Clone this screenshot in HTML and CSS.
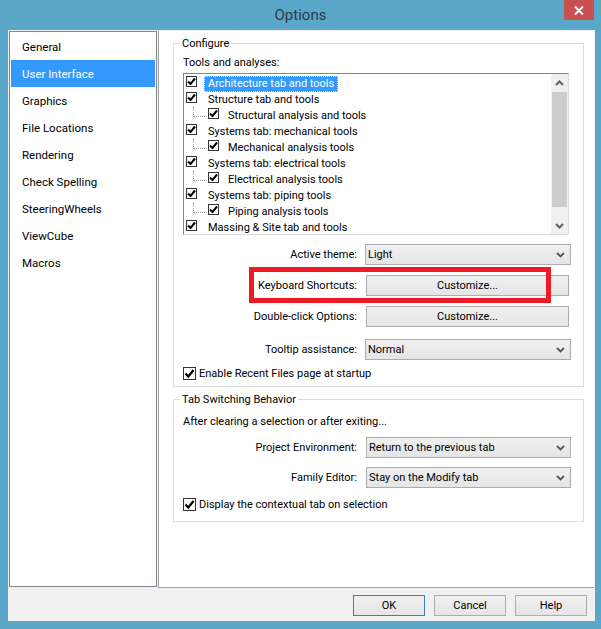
FILE: index.html
```html
<!DOCTYPE html>
<html>
<head>
<meta charset="utf-8">
<title>Options</title>
<link rel="stylesheet" href="styles.css">
</head>
<body>
<div class="window">
  <div class="titlebar">
    <span class="title">Options</span>
    <span class="close"><svg width="10" height="9" viewBox="0 0 10 9"><path d="M1 0.5 L9 8.5 M9 0.5 L1 8.5" stroke="#fff" stroke-width="2"/></svg></span>
  </div>
  <div class="client">
    <div class="main">
      <ul class="nav">
        <li>General</li>
        <li class="sel">User Interface</li>
        <li>Graphics</li>
        <li>File Locations</li>
        <li>Rendering</li>
        <li>Check Spelling</li>
        <li>SteeringWheels</li>
        <li>ViewCube</li>
        <li>Macros</li>
      </ul>
      <div class="panel">
        <fieldset class="group g1">
          <legend>Configure</legend>
          <div class="caption">Tools and analyses:</div>
          <div class="listbox">
            <div class="rows">
              <div class="item"><span class="cb"><svg width="9" height="9" viewBox="0 0 9 9"><path d="M1 4.5 L3.5 7 L8 1.5" fill="none" stroke="#000" stroke-width="2"/></svg></span><span class="lbl hl">Architecture tab and tools</span></div>
              <div class="item"><span class="cb"><svg width="9" height="9" viewBox="0 0 9 9"><path d="M1 4.5 L3.5 7 L8 1.5" fill="none" stroke="#000" stroke-width="2"/></svg></span><span class="lbl">Structure tab and tools</span></div>
              <div class="item child"><span class="tree"></span><span class="cb"><svg width="9" height="9" viewBox="0 0 9 9"><path d="M1 4.5 L3.5 7 L8 1.5" fill="none" stroke="#000" stroke-width="2"/></svg></span><span class="lbl">Structural analysis and tools</span></div>
              <div class="item"><span class="cb"><svg width="9" height="9" viewBox="0 0 9 9"><path d="M1 4.5 L3.5 7 L8 1.5" fill="none" stroke="#000" stroke-width="2"/></svg></span><span class="lbl">Systems tab: mechanical tools</span></div>
              <div class="item child"><span class="tree"></span><span class="cb"><svg width="9" height="9" viewBox="0 0 9 9"><path d="M1 4.5 L3.5 7 L8 1.5" fill="none" stroke="#000" stroke-width="2"/></svg></span><span class="lbl">Mechanical analysis tools</span></div>
              <div class="item"><span class="cb"><svg width="9" height="9" viewBox="0 0 9 9"><path d="M1 4.5 L3.5 7 L8 1.5" fill="none" stroke="#000" stroke-width="2"/></svg></span><span class="lbl">Systems tab: electrical tools</span></div>
              <div class="item child"><span class="tree"></span><span class="cb"><svg width="9" height="9" viewBox="0 0 9 9"><path d="M1 4.5 L3.5 7 L8 1.5" fill="none" stroke="#000" stroke-width="2"/></svg></span><span class="lbl">Electrical analysis tools</span></div>
              <div class="item"><span class="cb"><svg width="9" height="9" viewBox="0 0 9 9"><path d="M1 4.5 L3.5 7 L8 1.5" fill="none" stroke="#000" stroke-width="2"/></svg></span><span class="lbl">Systems tab: piping tools</span></div>
              <div class="item child"><span class="tree"></span><span class="cb"><svg width="9" height="9" viewBox="0 0 9 9"><path d="M1 4.5 L3.5 7 L8 1.5" fill="none" stroke="#000" stroke-width="2"/></svg></span><span class="lbl">Piping analysis tools</span></div>
              <div class="item"><span class="cb"><svg width="9" height="9" viewBox="0 0 9 9"><path d="M1 4.5 L3.5 7 L8 1.5" fill="none" stroke="#000" stroke-width="2"/></svg></span><span class="lbl">Massing &amp; Site tab and tools</span></div>
            </div>
            <div class="scrollbar">
              <div class="arrow"><svg width="9" height="6" viewBox="0 0 9 6"><path d="M1 5 L4.5 1.5 L8 5" fill="none" stroke="#606060" stroke-width="2"/></svg></div>
              <div class="track"><div class="thumb"></div></div>
              <div class="arrow"><svg width="9" height="6" viewBox="0 0 9 6"><path d="M1 1 L4.5 4.5 L8 1" fill="none" stroke="#606060" stroke-width="2"/></svg></div>
            </div>
          </div>

          <div class="row r-theme">
            <label>Active theme:</label>
            <div class="select"><span>Light</span><svg width="9" height="6" viewBox="0 0 9 6"><path d="M1 1 L4.5 4.5 L8 1" fill="none" stroke="#555" stroke-width="1.8"/></svg></div>
          </div>
          <div class="row r-kbd">
            <label>Keyboard Shortcuts:</label>
            <div class="button">Customize...</div>
            <div class="callout"></div>
          </div>
          <div class="row r-dbl">
            <label>Double-click Options:</label>
            <div class="button">Customize...</div>
          </div>
          <div class="row r-tip">
            <label>Tooltip assistance:</label>
            <div class="select"><span>Normal</span><svg width="9" height="6" viewBox="0 0 9 6"><path d="M1 1 L4.5 4.5 L8 1" fill="none" stroke="#555" stroke-width="1.8"/></svg></div>
          </div>
          <div class="check r-recent"><span class="box"><svg width="11" height="11" viewBox="0 0 11 11"><path d="M1.5 5.5 L4.3 8.5 L9.5 2" fill="none" stroke="#000" stroke-width="2.2"/></svg></span><span>Enable Recent Files page at startup</span></div>
        </fieldset>

        <fieldset class="group g2">
          <legend>Tab Switching Behavior</legend>
          <div class="caption">After clearing a selection or after exiting...</div>
          <div class="row r-proj">
            <label>Project Environment:</label>
            <div class="select"><span>Return to the previous tab</span><svg width="9" height="6" viewBox="0 0 9 6"><path d="M1 1 L4.5 4.5 L8 1" fill="none" stroke="#555" stroke-width="1.8"/></svg></div>
          </div>
          <div class="row r-fam">
            <label>Family Editor:</label>
            <div class="select"><span>Stay on the Modify tab</span><svg width="9" height="6" viewBox="0 0 9 6"><path d="M1 1 L4.5 4.5 L8 1" fill="none" stroke="#555" stroke-width="1.8"/></svg></div>
          </div>
          <div class="check r-ctx"><span class="box"><svg width="11" height="11" viewBox="0 0 11 11"><path d="M1.5 5.5 L4.3 8.5 L9.5 2" fill="none" stroke="#000" stroke-width="2.2"/></svg></span><span>Display the contextual tab on selection</span></div>
        </fieldset>
      </div>
    </div>
    <div class="footer">
      <div class="fbtn default">OK</div>
      <div class="fbtn">Cancel</div>
      <div class="fbtn">Help</div>
    </div>
  </div>
</div>
</body>
</html>
```

FILE: styles.css
```css
* { box-sizing: border-box; }
html, body { margin: 0; padding: 0; }
body {
  width: 601px;
  height: 629px;
  overflow: hidden;
  background: #5ba7ca;
  font-family: Roboto, "Liberation Sans", sans-serif;
  font-size: 11px;
  color: #000;
}
.window {
  width: 601px;
  height: 629px;
  display: flex;
  flex-direction: column;
}
.titlebar {
  height: 30px;
  display: grid;
  grid-template-columns: 1fr auto 1fr;
  align-items: start;
}
.title {
  grid-column: 2;
  font-size: 15px;
  line-height: 30px;
  color: #2d3b44;
}
.close {
  grid-column: 3;
  justify-self: end;
  margin-right: 7px;
  width: 30px;
  height: 20px;
  background: #c75050;
  display: flex;
  align-items: center;
  justify-content: center;
}
.client {
  margin-left: 8px;
  width: 587px;
  height: 591px;
  background: #f0f0f0;
  display: flex;
  flex-direction: column;
}
.main {
  display: flex;
  gap: 1px;
  padding: 1px 0 0 1px;
}
.nav {
  width: 148px;
  height: 556px;
  margin: 0;
  padding: 1px 1px 0;
  list-style: none;
  background: #fff;
  border: 1px solid #828790;
  font-size: 11.5px;
}
.nav li {
  height: 27px;
  line-height: 27px;
  padding: 1px 0 0 11px;
}
.nav li.sel {
  background: #3399ff;
  color: #fff;
}
.panel {
  width: 436px;
  height: 557px;
  background: #fff;
  border-left: 1px solid #a0a0a0;
  border-bottom: 1px solid #a0a0a0;
  padding: 5px 0 0 14px;
}
.group {
  margin: 0;
  min-width: 0;
  width: 411px;
  border: 1px solid #dcdcdc;
}
.group legend {
  padding: 0 2px;
  margin-left: -3px;
  line-height: 15px;
}
.g1 { padding: 4px 10px 5px 9px; }
.g2 { padding: 7px 10px 9px 9px; margin-top: 5px; }
.caption { line-height: 16px; }

.listbox {
  margin-top: 2px;
  width: 386px;
  height: 162px;
  border: 1px solid #dcdcdc;
  border-top-color: #828790;
  border-left-color: #828790;
  display: flex;
  overflow: hidden;
}
.rows {
  flex: 1;
  padding: 1px 0 0 2px;
  overflow: hidden;
}
.item {
  height: 16px;
  display: flex;
  align-items: flex-start;
  white-space: nowrap;
}
.cb {
  width: 11px;
  height: 11px;
  margin-top: 1px;
  border: 1px solid #333;
  background: #fff;
  display: flex;
  align-items: center;
  justify-content: center;
}
.lbl {
  margin-left: 7px;
  margin-top: 1px;
  padding: 0 3px;
  line-height: 14px;
  border: 1px solid transparent;
}
.child .lbl { margin-left: 5px; }
.lbl.hl {
  background: #3399ff;
  color: #fff;
  border: 1px dotted #cfe6ff;
}
.tree {
  width: 12px;
  height: 10px;
  margin-left: 7px;
  margin-right: 3px;
  border-left: 1px dotted #9a9a9a;
  border-bottom: 1px dotted #9a9a9a;
}
.scrollbar {
  width: 17px;
  background: #f0f0f0;
  display: flex;
  flex-direction: column;
}
.arrow {
  height: 17px;
  display: flex;
  align-items: center;
  justify-content: center;
}
.track { flex: 1; }
.thumb {
  margin: 1px 1px 0;
  height: 115px;
  background: #cdcdcd;
}

.row {
  display: grid;
  grid-template-columns: 174px 206px;
  column-gap: 8px;
  align-items: center;
  position: relative;
}
.row label {
  text-align: right;
}
.r-theme { margin-top: 9px; }
.r-kbd { margin-top: 10px; }
.r-dbl { margin-top: 10px; }
.r-tip { margin-top: 12px; }
.r-proj { margin-top: 7px; }
.r-fam { margin-top: 9px; }
.r-proj .select, .r-fam .select { margin-left: 1px; }

.select {
  height: 21px;
  border: 1px solid #acacac;
  background: linear-gradient(#f0f0f0, #e5e5e5);
  display: flex;
  align-items: center;
  justify-content: space-between;
  padding: 0 5px 0 2px;
}
.button {
  height: 21px;
  width: 203px;
  margin-left: 1px;
  border: 1px solid #acacac;
  background: linear-gradient(#f0f0f0, #e5e5e5);
  display: flex;
  align-items: center;
  justify-content: center;
}
.callout {
  position: absolute;
  left: 66px;
  top: -8px;
  width: 302px;
  height: 36px;
  border: 5px solid #ed1c24;
}
.check {
  display: flex;
  align-items: center;
  height: 16px;
}
.r-recent { margin-top: 5px; }
.r-ctx { margin-top: 8px; }
.box {
  width: 13px;
  height: 13px;
  margin-right: 3px;
  border: 1px solid #333;
  background: #fff;
  display: flex;
  align-items: center;
  justify-content: center;
}
.footer {
  display: flex;
  justify-content: flex-end;
  gap: 9px;
  padding: 7px 8px 0 0;
}
.fbtn {
  width: 72px;
  height: 21px;
  border: 1px solid #acacac;
  background: linear-gradient(#f0f0f0, #e5e5e5);
  display: flex;
  align-items: center;
  justify-content: center;
}
.fbtn.default {
  border-color: #3c7fb1;
}
```
